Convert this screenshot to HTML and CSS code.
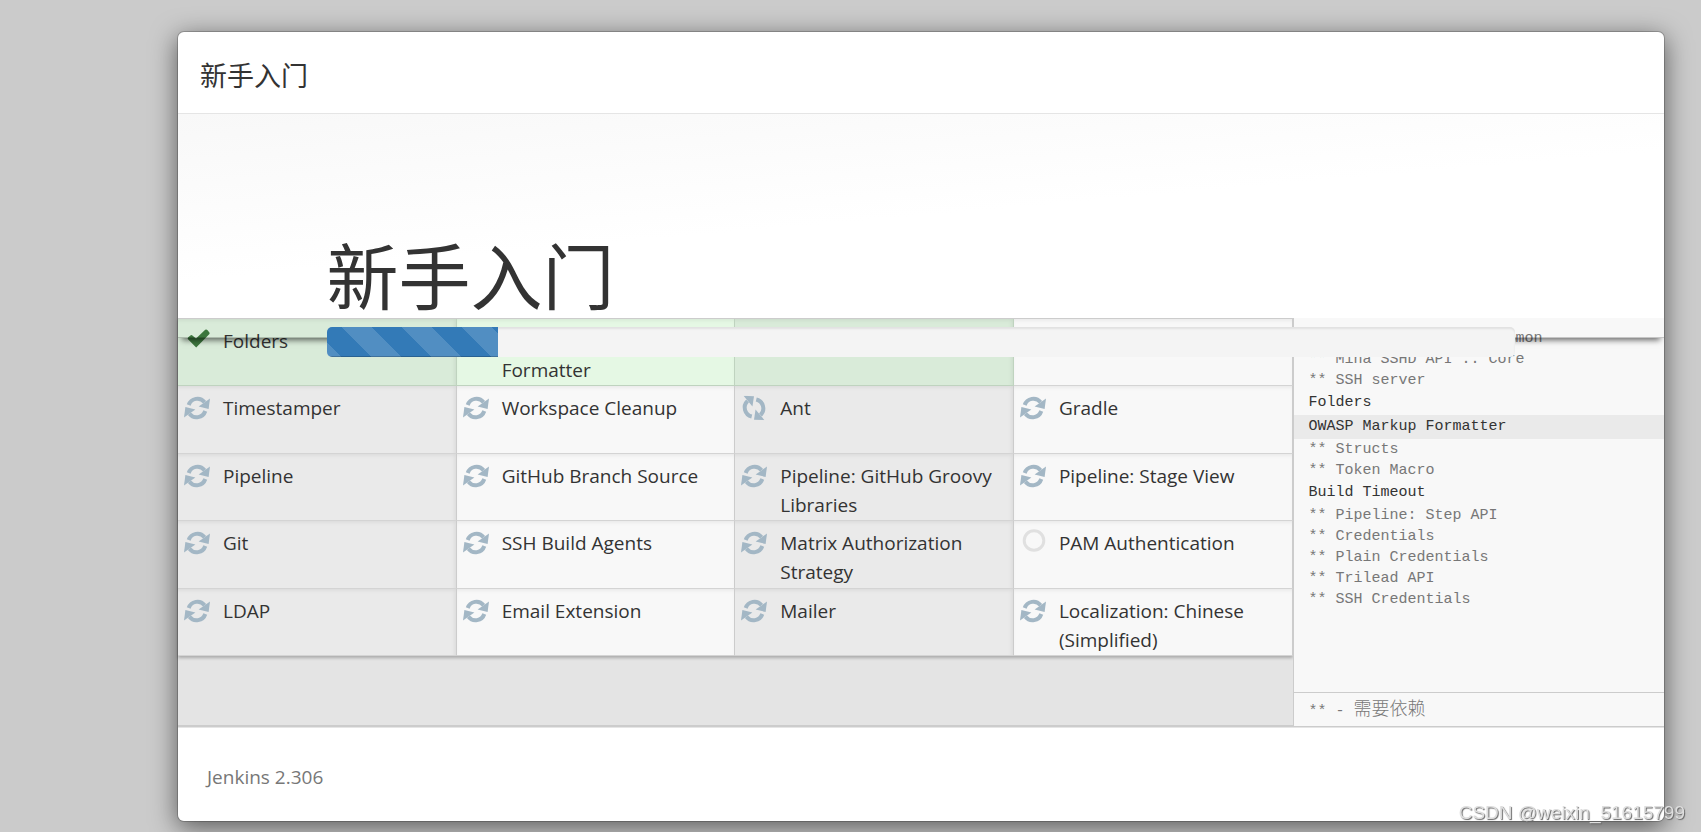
FILE: index.html
```html
<!DOCTYPE html>
<html lang="zh-CN">
<head>
<meta charset="utf-8">
<title>新手入门</title>
<link rel="stylesheet" href="styles.css">
</head>
<body>
<svg class="sprite" aria-hidden="true">
  <symbol id="sync" viewBox="0 0 26 24">
    <path d="M4.7 9A9.2 9.2 0 0 1 20.6 6.2" fill="none" stroke="currentColor" stroke-width="4"/>
    <path d="M26 2.6L24.6 13L14.6 10.6Z" fill="currentColor"/>
    <path d="M21.3 15A9.2 9.2 0 0 1 5.4 17.8" fill="none" stroke="currentColor" stroke-width="4"/>
    <path d="M0 21.4L1.4 11L11.4 13.4Z" fill="currentColor"/>
  </symbol>
  <symbol id="check" viewBox="0 0 26 24">
    <path d="M4.2 8.2L6.8 6.2Q7.6 5.8 8.4 6.6L12 9.6L21.2 .8Q22.4 0 23.6 1.2L25.4 3.4Q26 4.4 25.2 5.2L12.2 18.4L4 10.2Q3.2 9.1 4.2 8.2Z" fill="currentColor"/>
  </symbol>
  <symbol id="ring" viewBox="0 0 26 24">
    <circle cx="14" cy="11.5" r="9.8" fill="none" stroke="currentColor" stroke-width="3"/>
  </symbol>
</svg>

<main class="modal">
  <header class="modal-header"><h4 class="modal-title">新手入门</h4></header>

  <section class="jumbotron">
    <h1 class="headline">新手入门</h1>
    <div class="progress" role="progressbar" aria-label="新手入门"><div class="progress-bar"></div></div>
  </section>

  <div class="panel">
    <div class="plugins">
      <ul class="plugin-list">
        <li class="plugin success"><svg class="icon"><use href="#check"/></svg>Folders</li>
        <li class="plugin success"><svg class="icon"><use href="#check"/></svg>OWASP Markup<br>Formatter</li>
        <li class="plugin success"><svg class="icon"><use href="#check"/></svg>Build Timeout</li>
        <li class="plugin"><svg class="icon"><use href="#sync"/></svg>Credentials Binding</li>
        <li class="plugin"><svg class="icon"><use href="#sync"/></svg>Timestamper</li>
        <li class="plugin"><svg class="icon"><use href="#sync"/></svg>Workspace Cleanup</li>
        <li class="plugin"><svg class="icon turning"><use href="#sync"/></svg>Ant</li>
        <li class="plugin"><svg class="icon"><use href="#sync"/></svg>Gradle</li>
        <li class="plugin"><svg class="icon"><use href="#sync"/></svg>Pipeline</li>
        <li class="plugin"><svg class="icon"><use href="#sync"/></svg>GitHub Branch Source</li>
        <li class="plugin"><svg class="icon"><use href="#sync"/></svg>Pipeline: GitHub Groovy Libraries</li>
        <li class="plugin"><svg class="icon"><use href="#sync"/></svg>Pipeline: Stage View</li>
        <li class="plugin"><svg class="icon"><use href="#sync"/></svg>Git</li>
        <li class="plugin"><svg class="icon"><use href="#sync"/></svg>SSH Build Agents</li>
        <li class="plugin"><svg class="icon"><use href="#sync"/></svg>Matrix Authorization Strategy</li>
        <li class="plugin pending"><svg class="icon"><use href="#ring"/></svg>PAM Authentication</li>
        <li class="plugin"><svg class="icon"><use href="#sync"/></svg>LDAP</li>
        <li class="plugin"><svg class="icon"><use href="#sync"/></svg>Email Extension</li>
        <li class="plugin"><svg class="icon"><use href="#sync"/></svg>Mailer</li>
        <li class="plugin"><svg class="icon"><use href="#sync"/></svg>Localization: Chinese (Simplified)</li>
      </ul>
    </div>
    <aside class="console">
      <div class="log">
        <div class="dep">** Mina SSHD API .. Common</div>
        <div class="dep">** Mina SSHD API .. Core</div>
        <div class="dep">** SSH server</div>
        <div class="main">Folders</div>
        <div class="main selected">OWASP Markup Formatter</div>
        <div class="dep">** Structs</div>
        <div class="dep">** Token Macro</div>
        <div class="main">Build Timeout</div>
        <div class="dep">** Pipeline: Step API</div>
        <div class="dep">** Credentials</div>
        <div class="dep">** Plain Credentials</div>
        <div class="dep">** Trilead API</div>
        <div class="dep">** SSH Credentials</div>
      </div>
      <div class="legend">** - <span class="legend-text">需要依赖</span></div>
    </aside>
  </div>

  <footer class="modal-footer">Jenkins 2.306</footer>
</main>
<div class="watermark">CSDN @weixin_51615799</div>
</body>
</html>
```

FILE: styles.css
```css
* { box-sizing: border-box; }

body {
  margin: 0;
  padding: 31px 36px 10px 177px;
  background: #cbcbcb;
  color: #333;
  font: 19px/30px "Open Sans", "Noto Sans", "Noto Sans CJK SC", sans-serif;
}

.sprite { position: absolute; width: 0; height: 0; }

.modal {
  display: flex;
  flex-direction: column;
  min-height: calc(100vh - 41px);
  border: 1px solid rgba(0, 0, 0, .2);
  border-radius: 7px;
  background: #fff;
  background-clip: padding-box;
  box-shadow: 0 6px 26px rgba(0, 0, 0, .55);
}

.modal-header {
  padding: 26px 22px 21px;
  border-bottom: 1px solid #e5e5e5;
}

.modal-title {
  margin: 0;
  font: 400 27px/34px "Noto Sans CJK SC", sans-serif;
}

.jumbotron {
  position: relative;
  padding: 113px 10% 0;
  background: linear-gradient(175deg, #f8f8f8, #fff 50%);
}

/* lower edge of the banner, cast over the plugin table */
.jumbotron::after {
  content: "";
  position: absolute;
  inset: 0 0 -20px;
  z-index: 1;
  border-bottom: 1px solid rgba(0, 0, 0, .2);
  box-shadow: 0 6px 6px -4px rgba(0, 0, 0, .6);
  clip-path: inset(0 0 -12px);
  pointer-events: none;
}

.headline {
  margin: 0;
  font: 400 72px/91px "Noto Sans CJK SC", sans-serif;
}

.progress {
  position: absolute;
  z-index: 2;
  right: 10%;
  bottom: -39px;
  left: 10%;
  height: 30px;
  overflow: hidden;
  border-radius: 5px;
  background: #f4f4f4;
  box-shadow: inset 0 2px 2px rgba(0, 0, 0, .08);
}

.progress-bar {
  width: 14.4%;
  height: 100%;
  background: linear-gradient(45deg, rgba(255, 255, 255, .15) 25%, transparent 25%, transparent 50%, rgba(255, 255, 255, .15) 50%, rgba(255, 255, 255, .15) 75%, transparent 75%) 15px 0 / 60px 60px #337ab7;
  box-shadow: inset 0 -1px 0 rgba(0, 0, 0, .2);
}

.panel {
  display: flex;
  flex: 1;
  border-bottom: 1px solid #ccc;
}

.plugins {
  flex: 0 0 75%;
  border-bottom: 1px solid #ccc;
  background: #e4e4e4;
}

.plugin-list {
  display: grid;
  grid-template-columns: repeat(4, 1fr);
  grid-auto-rows: 1fr;
  min-height: 338px;
  margin: 0;
  padding: 0;
  border-top: 1px solid #ccc;
  list-style: none;
  box-shadow: 0 2px 3px rgba(0, 0, 0, .25);
}

.plugin {
  position: relative;
  padding: 8px 12px 0 45px;
  border-right: 1px solid #ccc;
  border-bottom: 1px solid #d4d4d4;
  background: #f8f8f8;
  box-shadow: inset 0 3px 4px -2px rgba(0, 0, 0, .08);
  line-height: 29px;
}

.plugin:nth-child(odd) {
  background: #eaeaea;
  box-shadow: inset -3px 3px 4px -2px rgba(0, 0, 0, .08);
}

.plugin.success { border-color: #bfd3bf; background: #e5f8e4; }
.plugin.success:nth-child(odd) { background: #d9ebd9; }

.icon {
  position: absolute;
  top: 10px;
  left: 6px;
  width: 26px;
  height: 24px;
  color: #a3b7c5;
}

.success .icon { color: #3c763d; }
.pending .icon { top: 8px; color: #e0e0e0; }
.turning { transform: rotate(85deg); }

.console {
  display: flex;
  flex: 1;
  flex-direction: column;
  border-left: 1px solid #ccc;
  background: #f8f8f8;
  font: 15px/21px "Liberation Mono", "Noto Sans CJK SC", monospace;
}

.log { flex: 1; padding-top: 10px; }
.dep { padding-left: 15px; color: #777; }
.main { padding-left: 15px; line-height: 24px; }
.selected { background: #eaeaea; }

.legend {
  padding: 3px 0 0 15px;
  border-top: 1px solid #ccc;
  color: #777;
  line-height: 29px;
}

.legend-text { font-size: 18px; font-weight: 300; }

.modal-footer {
  padding: 34px 29px 29px;
  border-top: 1px solid #e5e5e5;
  color: #777;
}

.watermark {
  position: fixed;
  right: 16px;
  bottom: 4px;
  z-index: 3;
  color: #dedede;
  font: 19px/30px "Liberation Sans", sans-serif;
  text-shadow: 1px 1px 1px #666;
}
```
